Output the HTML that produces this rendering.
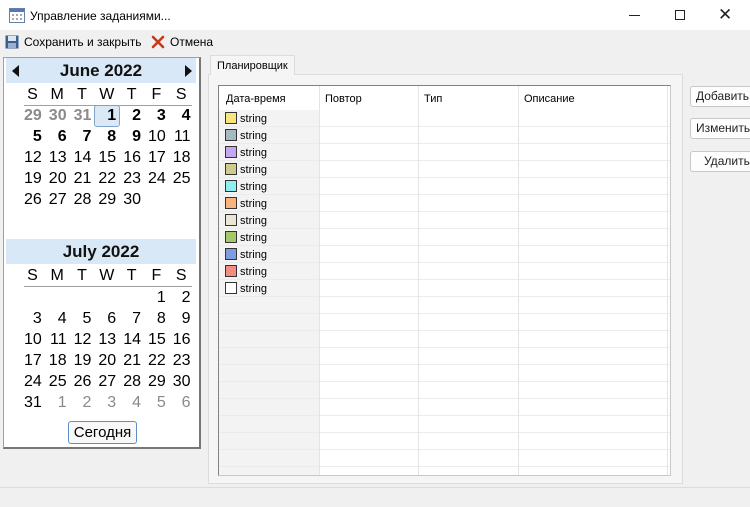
<!DOCTYPE html>
<html><head><meta charset="utf-8"><style>
*{box-sizing:border-box;margin:0;padding:0}
body{width:750px;height:507px;background:#f0f0f0;font-family:"Liberation Sans","DejaVu Sans",sans-serif;position:relative;overflow:hidden;font-size:12px;color:#000}
.a{position:absolute}
.cal{left:3px;top:57px;width:198px;height:392px;background:#fff;border:1px solid #a0a0a0;border-right:2px solid #777;border-bottom:2px solid #777;overflow:hidden}
.hd{position:absolute;left:2px;width:190px;height:25px;background:#d9e8f6;font-weight:bold;font-size:17px;text-align:center;line-height:25px;color:#111}
.row{position:absolute;left:13px;height:21px;font-size:16px;line-height:21px}
.row span{display:inline-block;width:24.8px;text-align:right}
.g{color:#8a8a8a}
.b{font-weight:bold}
.dn span{text-align:center;padding-left:6px}
.line{position:absolute;left:20px;width:168px;height:1px;background:#a0a0a0}
.grid{left:218px;top:85px;width:453px;height:391px;background:#fff;border:1px solid #828282;border-right-color:#c8c8c8;border-bottom-color:#c8c8c8;overflow:hidden}
.btn{position:absolute;left:690px;width:64px;height:21px;background:#fdfdfd;border:1px solid #c8c8c8;border-radius:3px;font-size:12px;line-height:19px;padding-left:5px;color:#222}
.sw{display:inline-block;width:12px;height:12px;border:1px solid #333;vertical-align:-2px}
</style></head><body>
<div class="a" style="left:0;top:0;width:750px;height:30px;background:#fff"></div>
<svg class="a" style="left:9px;top:8px" width="16" height="15"><rect x=".5" y=".5" width="15" height="14" fill="#fff" stroke="#6a7fa6"/><rect x="1" y="1" width="14" height="3" fill="#5577bb"/><g fill="#9ab"><rect x="3" y="6" width="2" height="2"/><rect x="7" y="6" width="2" height="2"/><rect x="11" y="6" width="2" height="2"/><rect x="3" y="10" width="2" height="2"/><rect x="7" y="10" width="2" height="2"/><rect x="11" y="10" width="2" height="2"/></g></svg>
<div class="a" style="left:30px;top:9px;font-size:12px">Управление заданиями...</div>
<div class="a" style="left:629px;top:15px;width:11px;height:1px;background:#222"></div>
<div class="a" style="left:675px;top:10px;width:10px;height:10px;border:1px solid #222"></div>
<div class="a" style="left:718px;top:6px;font-size:17px;line-height:17px;color:#222">✕</div>
<svg class="a" style="left:5px;top:35px" width="14" height="14"><rect x=".5" y=".5" width="13" height="13" fill="#3d5f8e"/><rect x="3" y="1" width="8" height="5" fill="#dde6f0"/><rect x="3" y="8" width="8" height="5" fill="#9ab0cc"/></svg>
<div class="a" style="left:24px;top:35px">Сохранить и закрыть</div>
<svg class="a" style="left:151px;top:35px" width="14" height="14"><path d="M2 2L12 12M12 2L2 12" stroke="#c8361b" stroke-width="2.6" stroke-linecap="round"/></svg>
<div class="a" style="left:170px;top:35px">Отмена</div>

<div class="cal a">
<div class="hd" style="top:0">June 2022</div>
<div class="a" style="left:8px;top:7px;width:0;height:0;border-top:6px solid transparent;border-bottom:6px solid transparent;border-right:7px solid #111"></div>
<div class="a" style="left:181px;top:7px;width:0;height:0;border-top:6px solid transparent;border-bottom:6px solid transparent;border-left:7px solid #111"></div>
<div class="row dn" style="top:26px"><span>S</span><span>M</span><span>T</span><span>W</span><span>T</span><span>F</span><span>S</span></div>
<div class="line" style="top:47px"></div>
<div class="a" style="left:90px;top:47px;width:26px;height:22px;background:#dbe9f7;border:1px solid #7ea4cc;border-radius:3px"></div>
<div class="row b" style="top:47px"><span class="g">29</span><span class="g">30</span><span class="g">31</span><span>1</span><span>2</span><span>3</span><span>4</span></div>
<div class="row" style="top:68px"><span class="b">5</span><span class="b">6</span><span class="b">7</span><span class="b">8</span><span class="b">9</span><span>10</span><span>11</span></div>
<div class="row" style="top:89px"><span>12</span><span>13</span><span>14</span><span>15</span><span>16</span><span>17</span><span>18</span></div>
<div class="row" style="top:110px"><span>19</span><span>20</span><span>21</span><span>22</span><span>23</span><span>24</span><span>25</span></div>
<div class="row" style="top:131px"><span>26</span><span>27</span><span>28</span><span>29</span><span>30</span></div>
<div class="hd" style="top:181px">July 2022</div>
<div class="row dn" style="top:207px"><span>S</span><span>M</span><span>T</span><span>W</span><span>T</span><span>F</span><span>S</span></div>
<div class="line" style="top:228px"></div>
<div class="row" style="top:229px"><span></span><span></span><span></span><span></span><span></span><span>1</span><span>2</span></div>
<div class="row" style="top:250px"><span>3</span><span>4</span><span>5</span><span>6</span><span>7</span><span>8</span><span>9</span></div>
<div class="row" style="top:271px"><span>10</span><span>11</span><span>12</span><span>13</span><span>14</span><span>15</span><span>16</span></div>
<div class="row" style="top:292px"><span>17</span><span>18</span><span>19</span><span>20</span><span>21</span><span>22</span><span>23</span></div>
<div class="row" style="top:313px"><span>24</span><span>25</span><span>26</span><span>27</span><span>28</span><span>29</span><span>30</span></div>
<div class="row" style="top:334px"><span>31</span><span class="g">1</span><span class="g">2</span><span class="g">3</span><span class="g">4</span><span class="g">5</span><span class="g">6</span></div>
<div class="a" style="left:64px;top:363px;width:69px;height:23px;border:1px solid #5b8fc7;border-radius:3px;background:#f8f8f8;font-size:15px;text-align:center;line-height:21px">Сегодня</div>
</div>

<div class="a" style="left:208px;top:74px;width:475px;height:410px;background:#f5f5f5;border:1px solid #dcdcdc"></div>
<div class="a" style="left:210px;top:55px;width:85px;height:20px;background:#f5f5f5;border:1px solid #dcdcdc;border-bottom:none;font-size:11px;padding:4px 0 0 6px">Планировщик</div>

<div class="a grid">
<div class="a" style="left:0;top:24px;width:100px;height:370px;background:#f3f3f3"></div>
<div class="a" style="left:0;top:24px;width:453px;height:370px;background:repeating-linear-gradient(to bottom,transparent 0,transparent 16px,#ebebeb 16px,#ebebeb 17px)"></div>
<div class="a" style="left:100px;top:0;width:1px;height:391px;background:#e4e4e4"></div>
<div class="a" style="left:199px;top:0;width:1px;height:391px;background:#e4e4e4"></div>
<div class="a" style="left:299px;top:0;width:1px;height:391px;background:#e4e4e4"></div>
<div class="a" style="left:448px;top:0;width:1px;height:391px;background:#e4e4e4"></div>
<div class="a" style="left:7px;top:7px;font-size:11px">Дата-время</div>
<div class="a" style="left:106px;top:7px;font-size:11px">Повтор</div>
<div class="a" style="left:205px;top:7px;font-size:11px">Тип</div>
<div class="a" style="left:305px;top:7px;font-size:11px">Описание</div>
</div>
<div class="a" style="left:225px;top:111px;font-size:11px;line-height:17px">
<div><span class="sw" style="background:#f9e67b"></span> string</div>
<div><span class="sw" style="background:#a5b9c3"></span> string</div>
<div><span class="sw" style="background:#c4a6f2"></span> string</div>
<div><span class="sw" style="background:#d0ca8c"></span> string</div>
<div><span class="sw" style="background:#8eeef2"></span> string</div>
<div><span class="sw" style="background:#f8b47c"></span> string</div>
<div><span class="sw" style="background:#ebe5d6"></span> string</div>
<div><span class="sw" style="background:#a5c86b"></span> string</div>
<div><span class="sw" style="background:#809ce0"></span> string</div>
<div><span class="sw" style="background:#f58c82"></span> string</div>
<div><span class="sw" style="background:#fff"></span> string</div>
</div>

<div class="btn" style="top:86px">Добавить</div>
<div class="btn" style="top:118px">Изменить</div>
<div class="btn" style="top:151px;padding-left:13px">Удалить</div>

<div class="a" style="left:0;top:487px;width:750px;height:1px;background:#dcdcdc"></div>
</body></html>
